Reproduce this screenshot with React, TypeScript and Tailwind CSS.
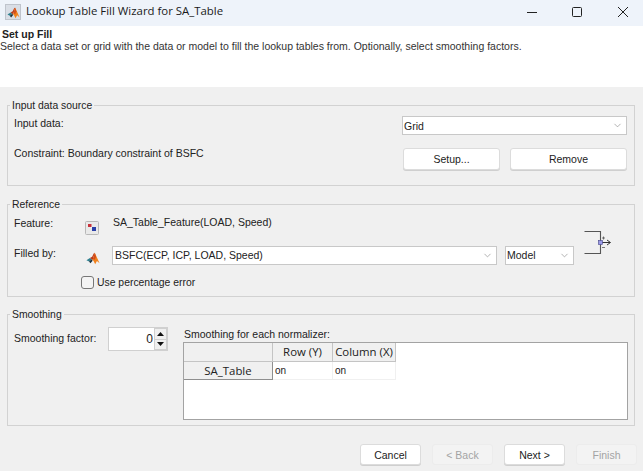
import React from 'react';
import { ChevronDown } from 'lucide-react';

const MatlabIcon = ({ size = 14 }: { size?: number }) => (
  <svg width={size} height={size} viewBox="0 0 16 16" className="shrink-0">
    <polygon points="0.5,10.5 4.5,8 6.5,9.5 3.5,12" fill="#2f7f8f" />
    <polygon points="3.5,12 6.5,9.5 7.5,11 5,14" fill="#16303f" />
    <polygon points="4.5,8 7,6.5 9,2.5 10,2 7.5,10.5 6.5,9.5" fill="#b93a18" />
    <polygon points="10,2 12.5,7.5 15.5,14 12.5,11.5 10.5,15 8.5,11 7.5,10.5" fill="#f0801c" />
    <polygon points="10,2 11.5,6.5 10,10 8,9" fill="#d44d1a" />
  </svg>
);

const FeatureIcon = () => (
  <svg width="14" height="14" viewBox="0 0 14 14" className="shrink-0">
    <rect x="0.5" y="0.5" width="13" height="13" rx="1" fill="#e9e9e9" stroke="#b8b8b8" />
    <path d="M5 5 L9 8" stroke="#ffffff" strokeWidth="1" />
    <rect x="3" y="3" width="3.5" height="3" fill="#c8323c" />
    <rect x="7" y="6" width="4" height="4" fill="#2a3fa8" />
  </svg>
);

const ConnectorIcon = () => (
  <svg width="30" height="26" viewBox="0 0 30 26" className="shrink-0">
    <path d="M0.5 1.5 H16.5 V23.5 H0.5" fill="none" stroke="#555555" strokeWidth="1.1" />
    <path d="M17 12.5 H26 M23 10 L26.5 12.5 L23 15" fill="none" stroke="#333333" />
    <rect x="14.5" y="10.5" width="4" height="4" fill="#9a9ae6" stroke="#444488" strokeWidth="0.6" />
    <path d="M18 8 H21 M19.5 6.5 V9.5 M18 17.5 H21" stroke="#444444" strokeWidth="0.7" />
  </svg>
);

const Select = ({ value, className }: { value: string; className: string }) => (
  <div className={`h-[19px] flex items-center justify-between bg-white border border-[#c8c8c8] pr-[3px] text-[#222] ${className}`}>
    <span>{value}</span>
    <ChevronDown size={11} strokeWidth={1.3} className="text-[#808080]" />
  </div>
);

const Button = ({ label, disabled, className }: { label: string; disabled?: boolean; className: string }) => (
  <button
    className={
      disabled
        ? `h-[21px] rounded-[3px] bg-[#f3f3f3] border border-[#ececec] text-[#a3a3a3] ${className}`
        : `rounded-[3px] bg-white border border-[#dcdcdc] text-[#222] shadow-[0_1px_0_#cfcfcf] ${className}`
    }
  >
    {label}
  </button>
);

const Group = ({ title, className, children }: { title: string; className: string; children: React.ReactNode }) => (
  <fieldset className={`border border-[#d2d2d2] ${className}`}>
    <legend className="-ml-[4px] px-[2px] translate-y-px text-[10.4px] leading-[12px] text-[#222]">{title}</legend>
    {children}
  </fieldset>
);

const headCell = 'bg-[#f0f0f0] border-r border-b border-[#c4c4c4] flex items-center justify-center text-[11.4px]';

export default function App() {
  return (
    <div className="w-[643px] h-[471px] overflow-hidden bg-[#f0f0f0] flex flex-col text-[10.5px] leading-[12px] text-[#222]" style={{ fontFamily: '"Liberation Sans", Arial, sans-serif' }}>
      {/* title bar */}
      <div className="h-[26px] shrink-0 bg-[#eef3fa] flex items-center pl-[5px]">
        <span className="w-[16px] h-[16px] -mt-[2px] flex items-center justify-center bg-[#d9dee6] border border-[#bfc4cc]">
          <MatlabIcon size={13} />
        </span>
        <span className="ml-[5px] -mt-[4px] text-[11.4px] text-[#1a1a1a]" style={{ fontFamily: '"Open Sans", sans-serif' }}>
          Lookup Table Fill Wizard for SA_Table
        </span>
        <div className="ml-auto flex items-center pr-[15px] -mt-[2px]">
          <svg width="10" height="10" viewBox="0 0 10 10" className="mr-[35px]">
            <path d="M0 5.5 H10" stroke="#222" />
          </svg>
          <svg width="10" height="10" viewBox="0 0 10 10" className="mr-[36px]">
            <rect x="0.5" y="0.5" width="9" height="9" rx="1" fill="none" stroke="#222" />
          </svg>
          <svg width="10" height="10" viewBox="0 0 10 10">
            <path d="M0 0 L10 10 M10 0 L0 10" stroke="#222" />
          </svg>
        </div>
      </div>

      {/* wizard header */}
      <div className="h-[61px] shrink-0 bg-white">
        <div className="pl-[2px] pt-[2px] font-bold text-[10.5px] leading-[13px]">Set up Fill</div>
        <div className="-mt-[1px] text-[10.5px] leading-[13px] text-[#333]">
          Select a data set or grid with the data or model to fill the lookup tables from. Optionally, select smoothing factors.
        </div>
      </div>

      <div className="flex flex-col pl-[7px] pr-[8px] pt-[12px]">
        {/* input data source */}
        <Group title="Input data source" className="h-[87px] pl-[6px]">
          <div className="flex items-start pt-[5px]">
            <span className="w-[388px] pt-[1px]">Input data:</span>
            <Select value="Grid" className="w-[225px] pl-[1px]" />
          </div>
          <div className="flex items-start pt-[13px]">
            <span className="w-[389px] -mt-[1px]">Constraint: Boundary constraint of BSFC</span>
            <Button label="Setup..." className="w-[97px] h-[22px]" />
            <Button label="Remove" className="w-[117px] h-[22px] ml-[10px]" />
          </div>
        </Group>

        {/* reference */}
        <Group title="Reference" className="h-[99px] mt-[12px] pl-[6px]">
          <div className="flex items-start">
            <div className="w-[570px] shrink-0">
              <div className="flex items-start pt-[6px]">
                <span className="w-[71px] pt-[1px]">Feature:</span>
                <span className="pt-[5px]"><FeatureIcon /></span>
                <span className="ml-[14px]">SA_Table_Feature(LOAD, Speed)</span>
              </div>
              <div className="flex items-center pt-[10px]">
                <span className="w-[72px] -mt-[4px]">Filled by:</span>
                <span className="mt-[6px]"><MatlabIcon /></span>
                <Select value="BSFC(ECP, ICP, LOAD, Speed)" className="w-[385px] ml-[12px] pl-[2px]" />
                <Select value="Model" className="w-[69px] ml-[8px] pl-[1px]" />
              </div>
              <div className="flex items-center pt-[11px] pl-[67px]">
                <span className="w-[13px] h-[13px] rounded-[3px] border border-[#777] bg-[#f4f4f4]" />
                <span className="ml-[3px] text-[10.4px]">Use percentage error</span>
              </div>
            </div>
            <div className="pt-[20px]">
              <ConnectorIcon />
            </div>
          </div>
        </Group>

        {/* smoothing */}
        <Group title="Smoothing" className="h-[118px] mt-[11px] pl-[6px]">
          <div className="flex items-start">
            <div className="flex items-start w-[169px] shrink-0 pt-[7px]">
              <span className="w-[94px] pt-[5px]">Smoothing factor:</span>
              <div className="w-[60px] h-[24px] flex bg-[#d4d4d4] border border-[#d0d0d0]">
                <span className="flex-1 bg-white text-right text-[12px] leading-[22px] pr-[1px]">0</span>
                <div className="w-[13px] flex flex-col gap-[1px] p-[1px] bg-[#d0d0d0]">
                  <span className="flex-1 flex items-center justify-center bg-[#f0f0f0]">
                    <svg width="7" height="4" viewBox="0 0 7 4"><path d="M3.5 0 L7 4 H0 Z" fill="#111" /></svg>
                  </span>
                  <span className="flex-1 flex items-center justify-center bg-[#f0f0f0]">
                    <svg width="7" height="4" viewBox="0 0 7 4"><path d="M0 0 H7 L3.5 4 Z" fill="#111" /></svg>
                  </span>
                </div>
              </div>
            </div>
            <div className="pt-[7px]">
              <div className="h-[15px] pl-[1px] pt-[1px]">Smoothing for each normalizer:</div>
              <div className="w-[445px] h-[78px] bg-white border border-[#a3a3a3]" style={{ fontFamily: '"Open Sans", sans-serif' }}>
                <div className="grid grid-cols-[89px_60px_63px] grid-rows-[19px_18px] w-[212px]">
                  <div className={headCell} />
                  <div className={headCell}>Row (Y)</div>
                  <div className={headCell}>Column (X)</div>
                  <div className="bg-[#f0f0f0] border-r border-b border-[#8f8f8f] flex items-center justify-center text-[11.4px]">SA_Table</div>
                  <div className="border-r border-b border-[#f0f0f0] pl-[2px] flex items-center text-[10px]" style={{ fontFamily: '"Liberation Sans", sans-serif' }}>on</div>
                  <div className="border-r border-b border-[#f0f0f0] pl-[2px] flex items-center text-[10px]" style={{ fontFamily: '"Liberation Sans", sans-serif' }}>on</div>
                </div>
              </div>
            </div>
          </div>
        </Group>
      </div>

      {/* footer buttons */}
      <div className="flex justify-end gap-[11px] pt-[18px] pr-[6px]">
        <Button label="Cancel" className="w-[61px] h-[21px]" />
        <Button label="< Back" disabled className="w-[61px]" />
        <Button label="Next >" className="w-[61px] h-[21px]" />
        <Button label="Finish" disabled className="w-[61px]" />
      </div>
    </div>
  );
}
